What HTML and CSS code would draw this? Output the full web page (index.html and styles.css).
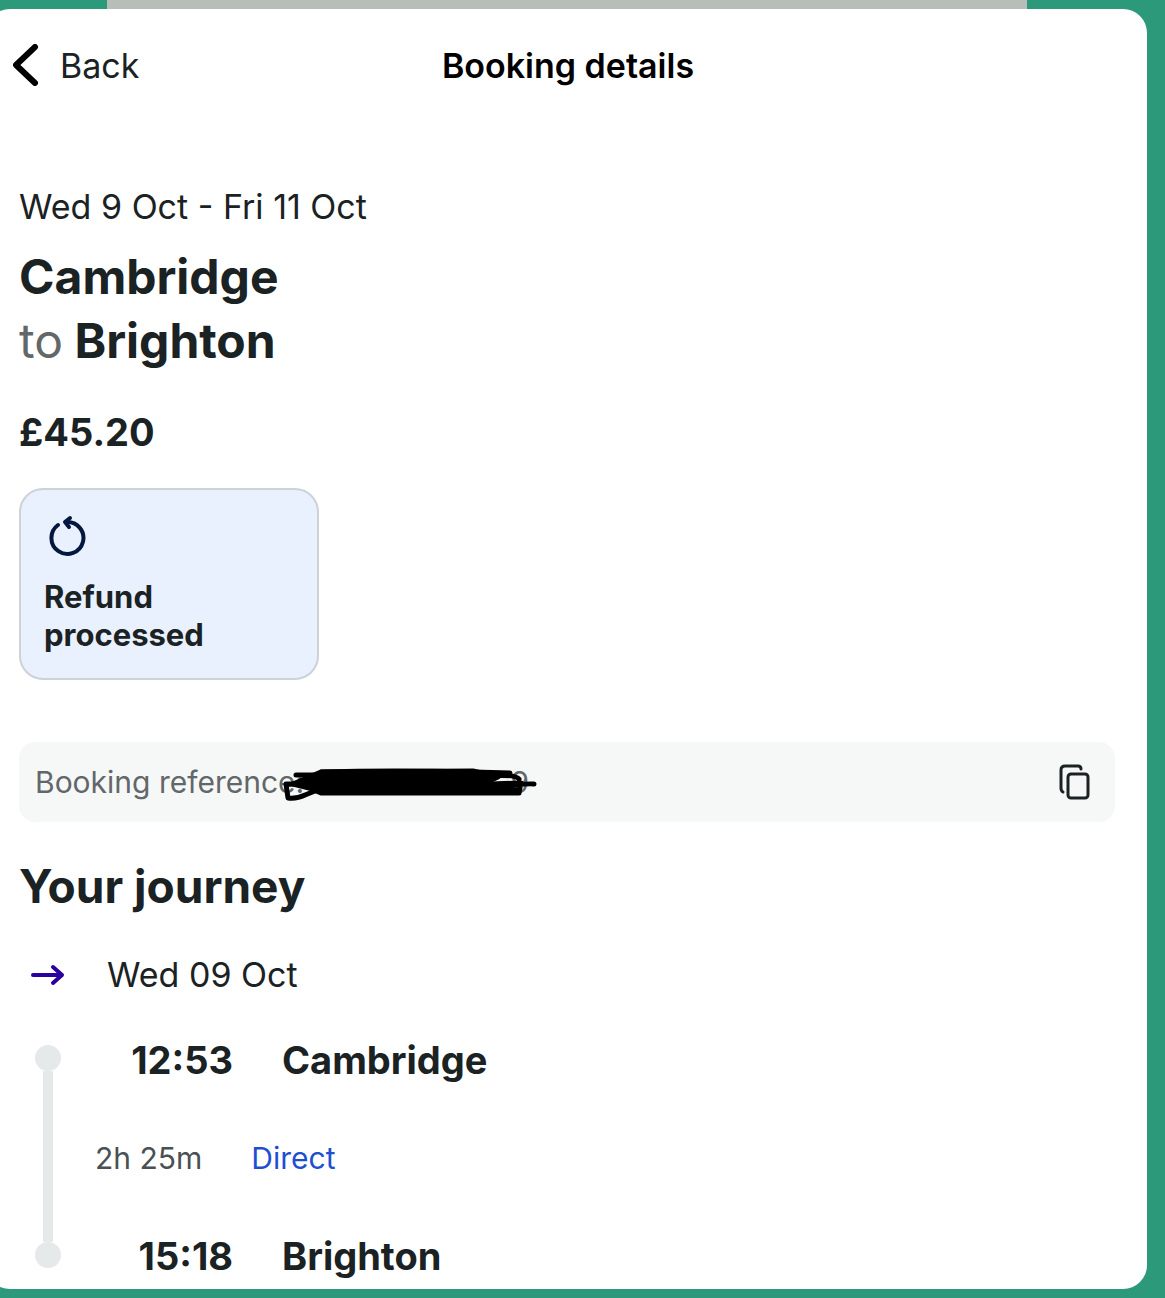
FILE: index.html
```html
<!DOCTYPE html>
<html lang="en">

<head>
    <meta charset="UTF-8">
    <meta name="viewport" content="width=device-width, initial-scale=1.0">
    <title>Booking details</title>
    <link rel="stylesheet" href="styles.css">
</head>

<body>
    <div class="top-strip"></div>
    <div class="sheet">
        <header class="sheet-header">
            <button type="button" class="back-button">
                <svg class="back-icon" viewBox="0 0 26 42" aria-hidden="true">
                    <path d="M22 3 L3 21 L22 39" />
                </svg>
                Back
            </button>
            <div class="header-title">Booking details</div>
        </header>

        <main>
            <p class="dates">Wed 9 Oct - Fri 11 Oct</p>
            <h1 class="route">Cambridge<br><span class="route-to">to</span> Brighton</h1>
            <p class="price">£45.20</p>

            <div class="refund-card">
                <svg class="refund-icon" viewBox="0 0 40 44" aria-hidden="true">
                    <path d="M10 11 A16 16 0 1 0 18 8" />
                    <path d="M22 4 L17 8 L21 13" />
                </svg>
                <div class="refund-text">Refund<br>processed</div>
            </div>

            <div class="reference">
                <div class="reference-text">Booking reference:<span class="redacted">9<svg class="scribble" viewBox="0 0 254 34" aria-hidden="true">
                    <path class="scribble-fill" d="M10 16 L38 4 L190 3 L215 9 L206 13 L208 20 L236 22 L236 25 L38 25 L26 20 Z" />
                    <path d="M13 7 H40 M38 4 Q110 2 190 4 L227 5 M205 8 Q232 6 236 11 M34 10 Q20 17 3 16 L5 30 Q14 31 22 27 L42 19 M208 16 L238 15 L236 24 M208 22 Q236 15 251 16" />
                </svg></span></div>
                <button type="button" class="copy-button" aria-label="Copy booking reference">
                    <svg class="copy-icon" viewBox="0 0 32 36" aria-hidden="true">
                        <path d="M4 28 Q2 27 2 24 V6 Q2 2 6 2 H19 Q22 2 22 5" />
                        <rect x="9" y="10" width="20" height="24" rx="3" />
                    </svg>
                </button>
            </div>

            <h2 class="journey-title">Your journey</h2>
            <div class="journey-date">
                <svg class="arrow-icon" viewBox="0 0 34 22" aria-hidden="true">
                    <path d="M2 11 H31 M22 3 L31 11 L22 19" />
                </svg>
                <span>Wed 09 Oct</span>
            </div>

            <div class="journey">
                <div class="rail">
                    <span class="rail-dot"></span>
                    <span class="rail-line"></span>
                    <span class="rail-dot"></span>
                </div>
                <div class="stops">
                    <div class="stop">
                        <time class="stop-time">12:53</time>
                        <span>Cambridge</span>
                    </div>
                    <div class="leg">
                        <span class="duration">2h 25m</span>
                        <a href="#" class="direct">Direct</a>
                    </div>
                    <div class="stop">
                        <time class="stop-time">15:18</time>
                        <span>Brighton</span>
                    </div>
                </div>
            </div>
        </main>
    </div>
</body>

</html>
```
FILE: styles.css
```css
body {
    font-family: Inter, "Liberation Sans", sans-serif;
    background-color: #2c997a;
    color: #1b2224;
    margin: 0;
    overflow-x: hidden;
}

p, h1, h2 {
    margin: 0;
}

button {
    font: inherit;
    color: inherit;
    background: none;
    border: none;
    padding: 0;
    cursor: pointer;
}

svg {
    fill: none;
    stroke-linecap: round;
    stroke-linejoin: round;
}

.top-strip {
    height: 9px;
    margin: 0 138px 0 107px;
    background-color: #b8bdb9;
}

/* The sheet runs off the left edge of the window */
.sheet {
    margin: 0 18px 9px -14px;
    padding-left: 14px;
    background-color: #fff;
    border-radius: 24px;
}

.sheet-header {
    display: grid;
    grid-template-columns: 1fr auto 1fr;
    align-items: center;
    height: 112px;
    padding: 0 24px 0 13px;
}

.back-button {
    display: flex;
    align-items: center;
    gap: 21px;
    font-size: 34px;
}

.back-icon {
    width: 26px;
    height: 42px;
    stroke: #000;
    stroke-width: 6;
}

.header-title {
    color: #000;
    font-size: 34px;
    font-weight: 600;
}

main {
    padding: 64px 32px 1px 19px;
}

.dates {
    font-size: 34px;
    line-height: 44px;
}

.route {
    margin-top: 16px;
    font-size: 48px;
    line-height: 64px;
    font-weight: 700;
}

.route-to {
    color: #626769;
    font-weight: 400;
}

.price {
    margin-top: 35px;
    font-size: 38px;
    line-height: 48px;
    font-weight: 700;
}

.refund-card {
    box-sizing: border-box;
    width: 300px;
    margin-top: 32px;
    padding: 24px 23px;
    background-color: #e9f0fe;
    border: 2px solid #cdd2d6;
    border-radius: 24px;
}

.refund-icon {
    display: block;
    width: 40px;
    height: 44px;
    margin: 0 0 20px 4px;
    stroke: #04173f;
    stroke-width: 4;
}

.refund-text {
    font-size: 31px;
    line-height: 38px;
    font-weight: 700;
}

.reference {
    display: flex;
    align-items: center;
    justify-content: space-between;
    height: 80px;
    margin-top: 62px;
    padding: 0 24px 0 16px;
    background-color: #f6f8f8;
    border-radius: 16px;
}

.reference-text {
    color: #626769;
    font-size: 30px;
}

.redacted {
    position: relative;
    display: inline-block;
    width: 225px;
    text-align: right;
}

.scribble {
    position: absolute;
    top: 4px;
    right: -8px;
    width: 254px;
    height: 34px;
    stroke: #000;
    stroke-width: 5;
}

.scribble-fill {
    fill: #000;
}

.copy-icon {
    display: block;
    width: 32px;
    height: 36px;
    stroke: #1b2224;
    stroke-width: 3;
}

.journey-title {
    margin-top: 32px;
    font-size: 46px;
    line-height: 64px;
    font-weight: 700;
}

.journey-date {
    display: flex;
    align-items: center;
    gap: 42px;
    margin-top: 35px;
    padding-left: 12px;
    font-size: 34px;
    line-height: 44px;
}

.arrow-icon {
    width: 34px;
    height: 22px;
    stroke: #2c00a0;
    stroke-width: 4;
}

.journey {
    display: flex;
    margin-top: 31px;
    padding-left: 16px;
}

.rail {
    display: flex;
    flex-direction: column;
    align-items: center;
    width: 26px;
    padding: 17px 0 20px;
}

.rail-dot {
    width: 26px;
    height: 26px;
    background-color: #e6e9e9;
    border-radius: 50%;
}

.rail-line {
    flex: 1;
    width: 10px;
    background-color: #e6e9e9;
}

.stop {
    display: flex;
    gap: 49px;
    font-size: 38px;
    line-height: 64px;
    font-weight: 700;
}

.stop-time {
    width: 172px;
    text-align: right;
}

.leg {
    display: flex;
    align-items: center;
    gap: 49px;
    height: 132px;
    padding-left: 34px;
    font-size: 30px;
}

.duration {
    color: #4a5053;
}

.direct {
    color: #1d4fd0;
    text-decoration: none;
}
```
